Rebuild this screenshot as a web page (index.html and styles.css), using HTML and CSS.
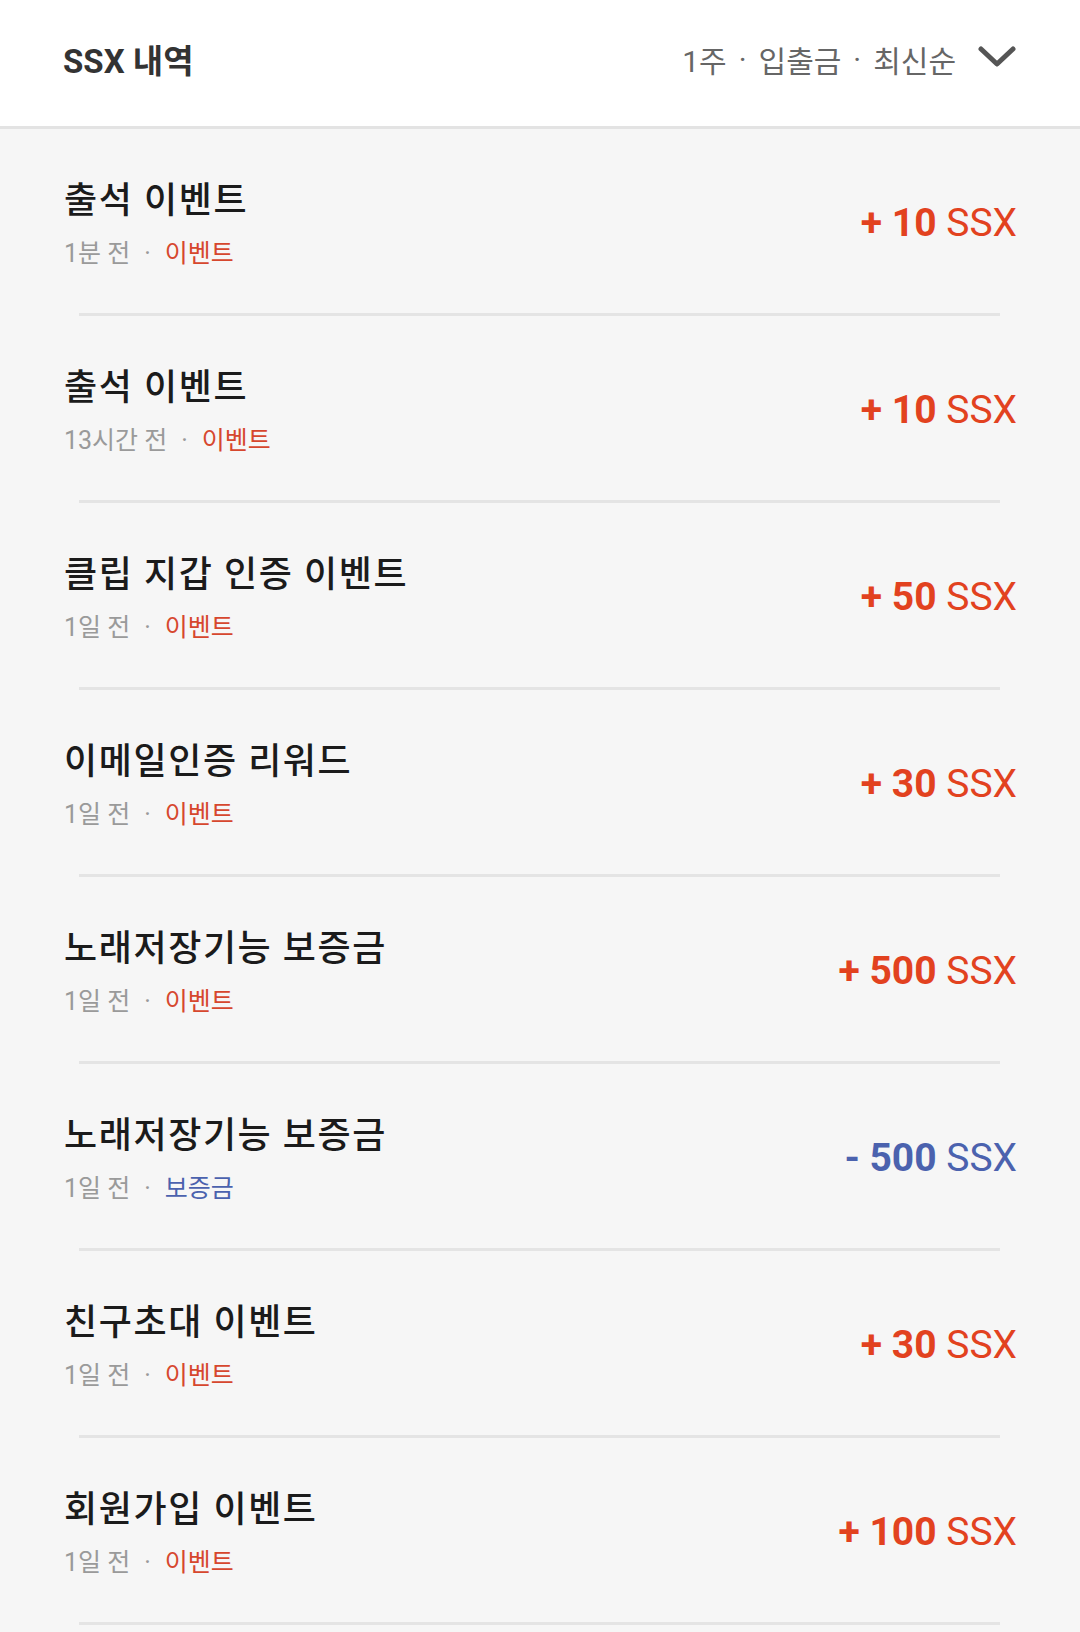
FILE: index.html
```html
<!DOCTYPE html>
<html lang="ko">
<head>
<meta charset="utf-8">
<link rel="stylesheet" href="styles.css">
</head>
<body>
<header class="top">
  <div class="top-title">SSX 내역</div>
  <div class="filter">
    <span class="filter-text">1주<span class="fdot">·</span>입출금<span class="fdot">·</span>최신순</span>
    <svg class="chev" width="38" height="22" viewBox="0 0 38 22"><path d="M3 3 L19 18 L35 3" fill="none" stroke="#555" stroke-width="5" stroke-linecap="round" stroke-linejoin="round"/></svg>
  </div>
</header>
<main class="list">
  <div class="row">
    <div class="info"><div class="title">출석 이벤트</div><div class="meta"><span class="time">1분 전</span><span class="dot">·</span><span class="cat red">이벤트</span></div></div>
    <div class="amount red"><b>+ 10</b> SSX</div>
  </div>
  <div class="divider"></div>
  <div class="row">
    <div class="info"><div class="title">출석 이벤트</div><div class="meta"><span class="time">13시간 전</span><span class="dot">·</span><span class="cat red">이벤트</span></div></div>
    <div class="amount red"><b>+ 10</b> SSX</div>
  </div>
  <div class="divider"></div>
  <div class="row">
    <div class="info"><div class="title">클립 지갑 인증 이벤트</div><div class="meta"><span class="time">1일 전</span><span class="dot">·</span><span class="cat red">이벤트</span></div></div>
    <div class="amount red"><b>+ 50</b> SSX</div>
  </div>
  <div class="divider"></div>
  <div class="row">
    <div class="info"><div class="title">이메일인증 리워드</div><div class="meta"><span class="time">1일 전</span><span class="dot">·</span><span class="cat red">이벤트</span></div></div>
    <div class="amount red"><b>+ 30</b> SSX</div>
  </div>
  <div class="divider"></div>
  <div class="row">
    <div class="info"><div class="title">노래저장기능 보증금</div><div class="meta"><span class="time">1일 전</span><span class="dot">·</span><span class="cat red">이벤트</span></div></div>
    <div class="amount red"><b>+ 500</b> SSX</div>
  </div>
  <div class="divider"></div>
  <div class="row">
    <div class="info"><div class="title">노래저장기능 보증금</div><div class="meta"><span class="time">1일 전</span><span class="dot">·</span><span class="cat blue">보증금</span></div></div>
    <div class="amount blue"><b>- 500</b> SSX</div>
  </div>
  <div class="divider"></div>
  <div class="row">
    <div class="info"><div class="title">친구초대 이벤트</div><div class="meta"><span class="time">1일 전</span><span class="dot">·</span><span class="cat red">이벤트</span></div></div>
    <div class="amount red"><b>+ 30</b> SSX</div>
  </div>
  <div class="divider"></div>
  <div class="row">
    <div class="info"><div class="title">회원가입 이벤트</div><div class="meta"><span class="time">1일 전</span><span class="dot">·</span><span class="cat red">이벤트</span></div></div>
    <div class="amount red"><b>+ 100</b> SSX</div>
  </div>
  <div class="divider"></div>
</main>
</body>
</html>
```
FILE: styles.css
```css
* { box-sizing: border-box; }
html, body { margin: 0; padding: 0; }
body {
  background: #f6f6f6;
  font-family: Roboto, "Noto Sans CJK KR", sans-serif;
  width: 1080px;
  height: 1632px;
  overflow: hidden;
}
.top {
  height: 129px;
  background: #fff;
  border-bottom: 3px solid #e3e3e3;
  display: flex;
  align-items: center;
  justify-content: space-between;
  padding: 0 64px 8px 63px;
}
.top-title {
  font-size: 33px;
  font-weight: 700;
  color: #333;
}
.filter {
  display: flex;
  align-items: center;
  gap: 22px;
}
.filter-text {
  font-size: 30px;
  color: #666;
  white-space: pre;
  display: flex;
  align-items: center;
}
.fdot { margin: 0 12px; }
.chev { display: block; margin-top: -4px; }
.row {
  height: 184px;
  display: flex;
  align-items: center;
  justify-content: space-between;
  padding: 4px 63px 0 64px;
}
.info { display: flex; flex-direction: column; }
.title {
  font-size: 36px;
  font-weight: 500;
  letter-spacing: 1.6px;
  color: #1b1b1b;
  line-height: 46px;
}
.meta {
  margin-top: 15px;
  font-size: 25px;
  line-height: 30px;
  color: #9a9a9a;
  display: flex;
}
.dot { margin: 0 14px; color: #9a9a9a; }
.red { color: #e2421f; }
.cat.red { color: #d6472e; }
.blue { color: #4b62ae; }
.amount {
  font-family: Roboto, sans-serif;
  font-size: 39px;
  white-space: pre;
}
.amount b { font-weight: 700; }
.divider {
  height: 3px;
  background: #e4e4e4;
  margin: 0 80px 0 79px;
}
```
